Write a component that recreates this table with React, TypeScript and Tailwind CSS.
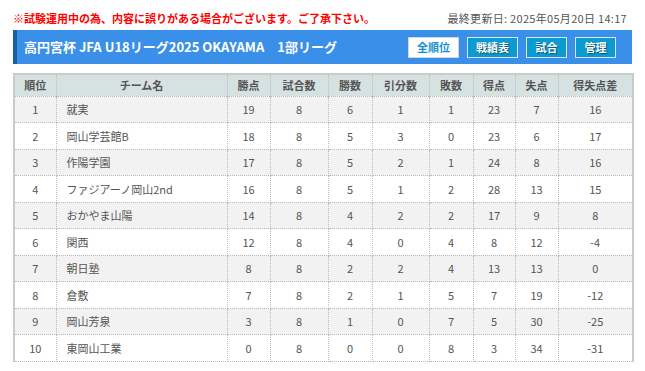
import React from "react";

const rows: [number, string, number, number, number, number, number, number, number, number][] = [
  [1, "就実", 19, 8, 6, 1, 1, 23, 7, 16],
  [2, "岡山学芸館B", 18, 8, 5, 3, 0, 23, 6, 17],
  [3, "作陽学園", 17, 8, 5, 2, 1, 24, 8, 16],
  [4, "ファジアーノ岡山2nd", 16, 8, 5, 1, 2, 28, 13, 15],
  [5, "おかやま山陽", 14, 8, 4, 2, 2, 17, 9, 8],
  [6, "関西", 12, 8, 4, 0, 4, 8, 12, -4],
  [7, "朝日塾", 8, 8, 2, 2, 4, 13, 13, 0],
  [8, "倉敷", 7, 8, 2, 1, 5, 7, 19, -12],
  [9, "岡山芳泉", 3, 8, 1, 0, 7, 5, 30, -25],
  [10, "東岡山工業", 0, 8, 0, 0, 8, 3, 34, -31],
];

const heads = ["順位", "チーム名", "勝点", "試合数", "勝数", "引分数", "敗数", "得点", "失点", "得失点差"];
const widths = [42, 171, 43, 58, 44, 57, 44, 42, 43, 75];

const font = { fontFamily: '"Noto Sans CJK JP", "Noto Sans", sans-serif' };

export default function App() {
  return (
    <div className="w-[645px] h-[371px] bg-white" style={font}>
      <div className="px-[13px] pt-[10px]">
        <div className="flex justify-between items-center h-[16px] text-[11px] leading-none">
          <span className="text-[#ff0000] font-bold">※試験運用中の為、内容に誤りがある場合がございます。ご了承下さい。</span>
          <span className="text-[#555] pr-[5px] tracking-[0.3px]">最終更新日: 2025年05月20日 14:17</span>
        </div>
        <div className="mt-[4px] h-[34px] bg-[#3a8fe8] border-l-[4px] border-[#1a5ea8] flex items-center justify-between pl-[7px] pr-[16px]">
          <span className="text-white font-bold text-[13px]">高円宮杯 JFA U18リーグ2025 OKAYAMA　1部リーグ</span>
          <div className="flex gap-[8px]">
            <span className="w-[51px] h-[21px] flex items-center justify-center bg-white border border-[#cfd8dc] text-[#1a8fd0] font-bold text-[11px]">全順位</span>
            <span className="w-[51px] h-[21px] flex items-center justify-center bg-[#0b9bd0] border border-[#d9e6ee] text-white font-bold text-[11px] [text-shadow:1px_1px_1px_rgba(0,0,0,0.5)]">戦績表</span>
            <span className="w-[41px] h-[21px] flex items-center justify-center bg-[#0b9bd0] border border-[#d9e6ee] text-white font-bold text-[11px] [text-shadow:1px_1px_1px_rgba(0,0,0,0.5)]">試合</span>
            <span className="w-[41px] h-[21px] flex items-center justify-center bg-[#0b9bd0] border border-[#d9e6ee] text-white font-bold text-[11px] [text-shadow:1px_1px_1px_rgba(0,0,0,0.5)]">管理</span>
          </div>
        </div>
        <table className="mt-[9px] w-[619px] border-collapse table-fixed text-[11px] text-[#555] border-t-2 border-x-2 border-[#c8cccc]">
          <colgroup>
            {widths.map((w, i) => (
              <col key={i} style={{ width: w }} />
            ))}
          </colgroup>
          <thead>
            <tr className="bg-[#d6e1e1] h-[22px]">
              {heads.map((h, i) => (
                <th key={i} className="font-bold text-[#555] border-r border-dotted border-[#bbb] p-0 text-center">
                  {h}
                </th>
              ))}
            </tr>
          </thead>
          <tbody>
            {rows.map((r, ri) => (
              <tr key={ri} className={`h-[26.5px] ${ri % 2 === 0 ? "bg-[#f2f2f2]" : "bg-white"}`}>
                {r.map((c, ci) => (
                  <td
                    key={ci}
                    className={`border border-dotted border-[#bbb] p-0 ${ci === 1 ? "text-left pl-[10px]" : "text-center"}`}
                  >
                    {c}
                  </td>
                ))}
              </tr>
            ))}
          </tbody>
        </table>
      </div>
    </div>
  );
}
